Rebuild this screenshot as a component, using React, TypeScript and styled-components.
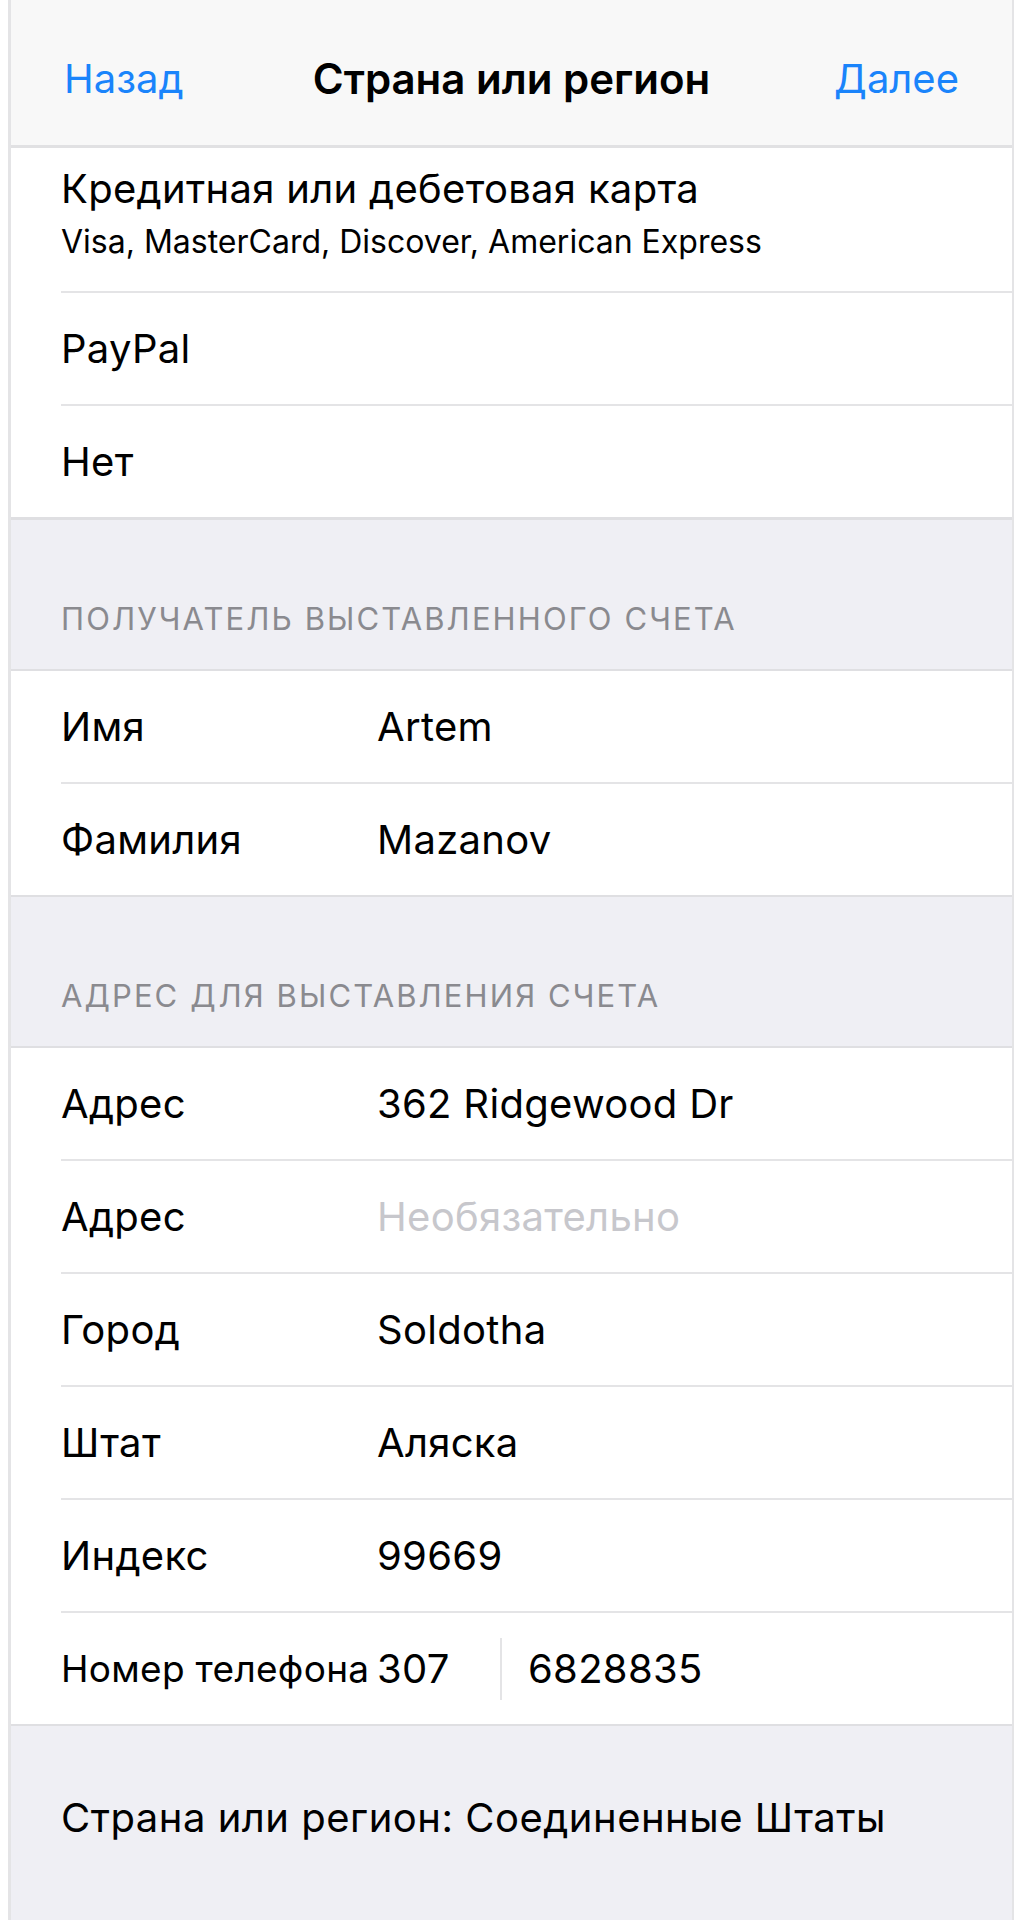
import styled, { createGlobalStyle } from 'styled-components';

const GlobalStyle = createGlobalStyle`
  html, body {
    margin: 0;
    padding: 0;
    background: #ffffff;
  }
  body {
    font-family: Inter, "Noto Sans", sans-serif;
    -webkit-font-smoothing: antialiased;
  }
`;

const Page = styled.div`
  width: 1029px;
  min-height: 1920px;
  padding-left: 8px;
  box-sizing: border-box;
  background: #ffffff;
`;

const Screen = styled.div`
  width: 1006px;
  min-height: 1920px;
  box-sizing: border-box;
  border-left: 3px solid #e4e4e6;
  border-right: 2px solid #e4e4e6;
  background: #efeff4;
  display: flex;
  flex-direction: column;
`;

const NavBar = styled.div`
  height: 148px;
  padding: 54px 53px 0;
  box-sizing: border-box;
  background: #f8f8f8;
  border-bottom: 3px solid #e1e1e3;
  display: grid;
  grid-template-columns: 1fr auto 1fr;
  align-items: center;
  align-content: start;
`;

const NavButton = styled.div<{ $align: 'left' | 'right' }>`
  font-size: 40px;
  line-height: 50px;
  color: #1a84fb;
  text-align: ${p => p.$align};
`;

const NavTitle = styled.div`
  font-size: 42px;
  line-height: 50px;
  font-weight: 600;
  color: #000;
`;

const Group = styled.div`
  background: #ffffff;
  border-top: 2px solid #dfdfe2;
  border-bottom: 2px solid #dfdfe2;
`;

const FirstGroup = styled.div`
  background: #ffffff;
  border-bottom: 3px solid #dfdfe2;
`;

const Row = styled.div<{ $last?: boolean }>`
  height: 111px;
  margin-left: 50px;
  display: flex;
  align-items: center;
  border-bottom: ${p => (p.$last ? 'none' : '2px solid #e4e4e6')};
`;

const CardRow = styled.div`
  margin-left: 50px;
  padding: 16px 0 31px;
  border-bottom: 2px solid #e4e4e6;
  display: flex;
  flex-direction: column;
  gap: 10px;
`;

const CellText = styled.div`
  font-size: 40px;
  line-height: 50px;
  letter-spacing: 0.3px;
  color: #000;
`;

const CellSub = styled.div`
  font-size: 32px;
  line-height: 36px;
  color: #000;
`;

const Label = styled.div<{ $small?: boolean }>`
  width: 316px;
  flex-shrink: 0;
  font-size: ${p => (p.$small ? '37px' : '40px')};
  line-height: 50px;
  letter-spacing: 0.3px;
  color: #000;
  white-space: nowrap;
`;

const Value = styled.div<{ $placeholder?: boolean }>`
  font-size: 40px;
  line-height: 50px;
  letter-spacing: 0.3px;
  color: ${p => (p.$placeholder ? '#c7c7cc' : '#000')};
`;

const PhoneCode = styled(Value)`
  width: 123px;
`;

const PhoneDivider = styled.div`
  width: 2px;
  height: 62px;
  background: #e4e4e6;
  margin-right: 26px;
`;

const SectionHeader = styled.div`
  height: 149px;
  padding: 0 50px 32px;
  box-sizing: border-box;
  display: flex;
  align-items: flex-end;
  font-size: 31px;
  line-height: 36px;
  letter-spacing: 2.1px;
  color: #8a8a8f;
  text-transform: uppercase;
`;

const Footer = styled.div`
  padding: 67px 50px 0;
  font-size: 40px;
  line-height: 50px;
  letter-spacing: 0.5px;
  color: #000;
`;

type Field = { label: string; value: string; placeholder?: boolean };

const recipient: Field[] = [
  { label: 'Имя', value: 'Artem' },
  { label: 'Фамилия', value: 'Mazanov' },
];

const address: Field[] = [
  { label: 'Адрес', value: '362 Ridgewood Dr' },
  { label: 'Адрес', value: 'Необязательно', placeholder: true },
  { label: 'Город', value: 'Soldotha' },
  { label: 'Штат', value: 'Аляска' },
  { label: 'Индекс', value: '99669' },
];

const App = () => {
  return (
    <Page>
      <GlobalStyle />
      <Screen>
        <NavBar>
          <NavButton $align="left">Назад</NavButton>
          <NavTitle>Страна или регион</NavTitle>
          <NavButton $align="right">Далее</NavButton>
        </NavBar>

        <FirstGroup>
          <CardRow>
            <CellText>Кредитная или дебетовая карта</CellText>
            <CellSub>Visa, MasterCard, Discover, American Express</CellSub>
          </CardRow>
          <Row>
            <CellText>PayPal</CellText>
          </Row>
          <Row $last>
            <CellText>Нет</CellText>
          </Row>
        </FirstGroup>

        <SectionHeader>Получатель выставленного счета</SectionHeader>
        <Group>
          {recipient.map((f, i) => (
            <Row key={f.label} $last={i === recipient.length - 1}>
              <Label>{f.label}</Label>
              <Value>{f.value}</Value>
            </Row>
          ))}
        </Group>

        <SectionHeader>Адрес для выставления счета</SectionHeader>
        <Group>
          {address.map((f, i) => (
            <Row key={i}>
              <Label>{f.label}</Label>
              <Value $placeholder={f.placeholder}>{f.value}</Value>
            </Row>
          ))}
          <Row $last>
            <Label $small>Номер телефона</Label>
            <PhoneCode>307</PhoneCode>
            <PhoneDivider />
            <Value>6828835</Value>
          </Row>
        </Group>

        <Footer>Страна или регион: Соединенные Штаты</Footer>
      </Screen>
    </Page>
  );
};

export default App;
